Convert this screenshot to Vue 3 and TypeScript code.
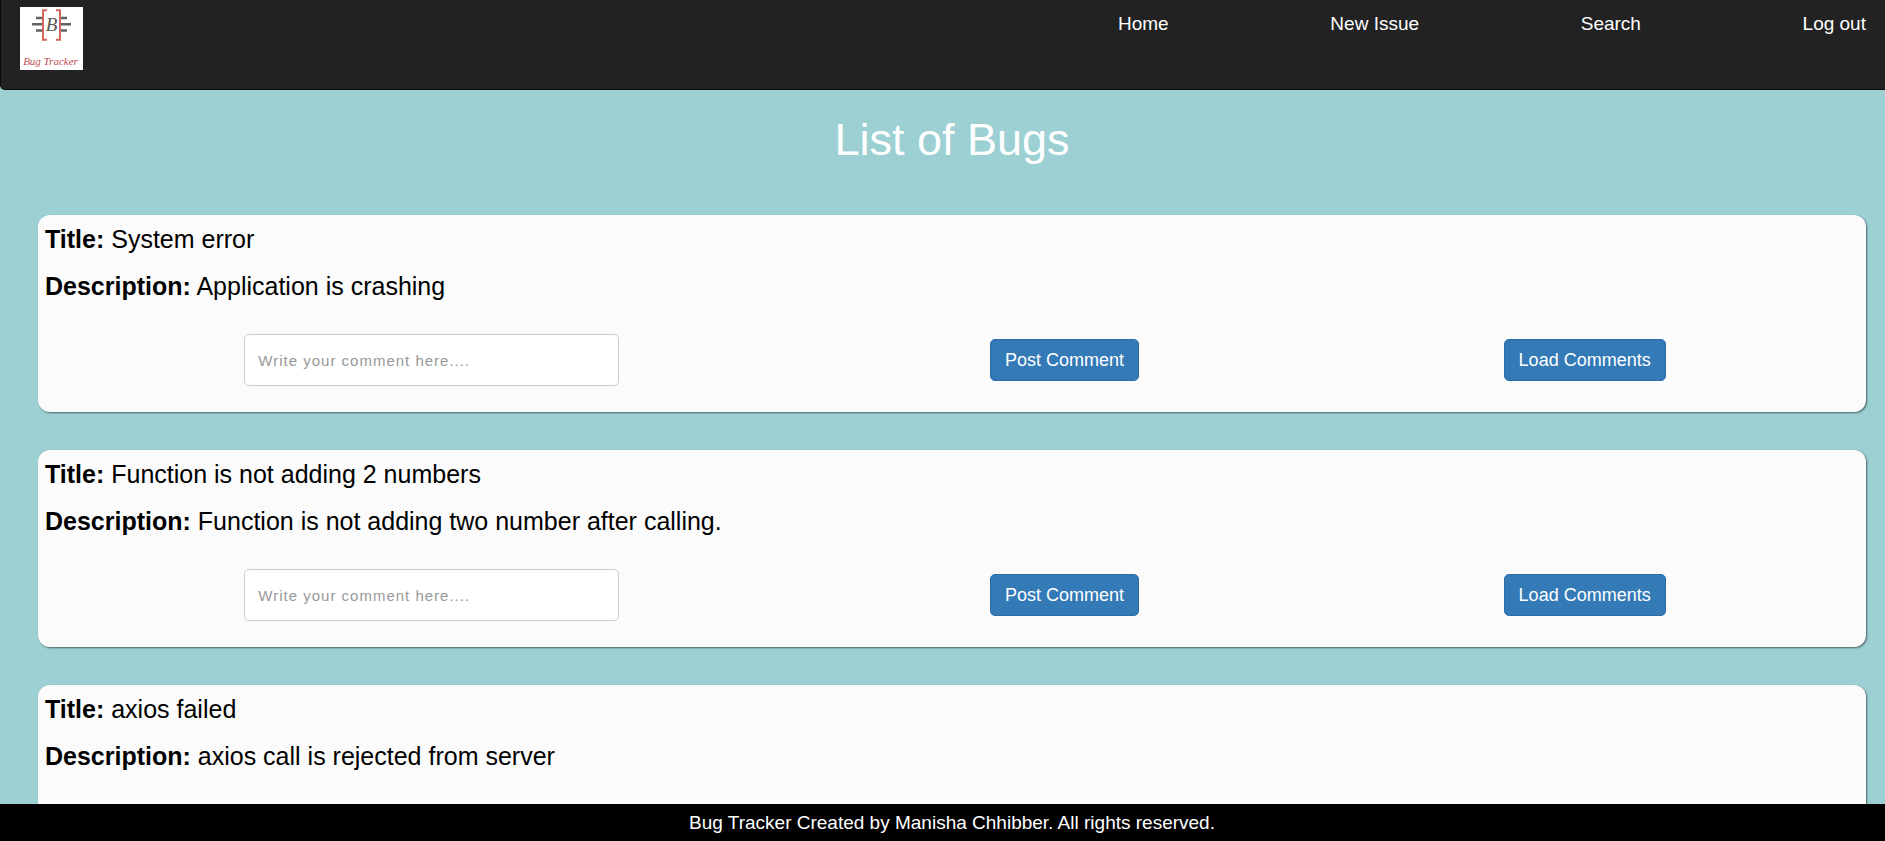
<script setup lang="ts">
import { ref } from 'vue'

interface Bug {
  id: number
  title: string
  description: string
  comment: string
}

const links: string[] = ['Home', 'New Issue', 'Search', 'Log out']

const bugs = ref<Bug[]>([
  { id: 1, title: 'System error', description: 'Application is crashing', comment: '' },
  { id: 2, title: 'Function is not adding 2 numbers', description: 'Function is not adding two number after calling.', comment: '' },
  { id: 3, title: 'axios failed', description: 'axios call is rejected from server', comment: '' },
])
</script>

<template>
  <div class="page">
    <div class="scroller">
      <header class="navbar">
        <a class="brand" href="#" aria-label="Bug Tracker">
          <svg class="logo" viewBox="0 0 63 63" aria-hidden="true">
            <rect width="63" height="63" fill="#fff" />
            <g stroke="#626262" stroke-width="2.4">
              <path d="M16 11h7M12 17.3h11M16 23.5h7M40 11h7M40 17.3h11M40 23.5h7" />
            </g>
            <g fill="none" stroke="#d4655c" stroke-width="2">
              <path d="M27 3.2h-4v29.6h4M36 3.2h4v29.6h-4" />
            </g>
            <text class="logo-letter" x="31.5" y="24" text-anchor="middle">B</text>
            <text class="logo-name" x="30.5" y="58" text-anchor="middle">Bug Tracker</text>
          </svg>
        </a>
        <nav class="links">
          <a v-for="link in links" :key="link" href="#">{{ link }}</a>
        </nav>
      </header>

      <main class="content">
        <h1>List of Bugs</h1>
        <article v-for="bug in bugs" :key="bug.id" class="card">
          <p><strong>Title:</strong> {{ bug.title }}</p>
          <p><strong>Description:</strong> {{ bug.description }}</p>
          <form class="actions" @submit.prevent>
            <input
              v-model="bug.comment"
              type="text"
              placeholder="Write your comment here...."
              :aria-label="'Comment on ' + bug.title"
            />
            <button type="submit">Post Comment</button>
            <button type="button">Load Comments</button>
          </form>
        </article>
      </main>
    </div>

    <footer class="footer">Bug Tracker Created by Manisha Chhibber. All rights reserved.</footer>
  </div>
</template>

<style>
body {
  margin: 0;
  background: #9dd0d3;
}
</style>

<style scoped>
.page {
  display: flex;
  flex-direction: column;
  height: 100vh;
  color: #000;
  font-family: "Liberation Sans", Arial, sans-serif;
}

.scroller {
  flex: 1;
  min-height: 0;
  overflow-y: auto;
  scrollbar-width: none;
}

.navbar {
  display: flex;
  justify-content: space-between;
  align-items: flex-start;
  box-sizing: border-box;
  min-height: 90px;
  padding: 7px 19px 6px;
  background: #222;
  border: solid #080808;
  border-width: 0 0 1px 1px;
  border-bottom-left-radius: 5px;
}

.brand,
.logo {
  display: block;
}

.logo {
  width: 63px;
  height: 63px;
}

.logo-letter {
  font: italic 19px "Liberation Serif", serif;
  fill: #555;
}

.logo-name {
  font: italic 11px "Liberation Serif", serif;
  fill: #c04a50;
}

.links {
  display: flex;
  justify-content: space-between;
  width: 748px;
  max-width: 80%;
  padding-top: 4px;
}

.links a {
  color: #fff;
  font-size: 19px;
  line-height: 26px;
  text-decoration: none;
}

.content {
  padding: 25px 19px 38px 38px;
}

h1 {
  margin: 0 0 50px;
  color: #fff;
  font-size: 45px;
  font-weight: 400;
  line-height: 50px;
  text-align: center;
}

.card {
  margin-bottom: 38px;
  padding: 6px 0 26px;
  background: #fbfbfb;
  border-radius: 12px;
  box-shadow: 1px 1px 2px #4a6668;
}

.card p {
  margin: 0 7px 11px;
  font-size: 25px;
  line-height: 36px;
}

.actions {
  display: flex;
  align-items: center;
  justify-content: space-around;
  margin-top: 30px;
  padding: 0 18px;
}

.actions input {
  box-sizing: border-box;
  width: 375px;
  height: 52px;
  margin: 0 6px;
  padding: 1px 13px 0;
  color: #555;
  background: #fff;
  border: 1px solid #ccc;
  border-radius: 5px;
  font-family: inherit;
  font-size: 15px;
  letter-spacing: 1px;
}

.actions input::placeholder {
  color: #999;
  opacity: 1;
}

.actions button {
  height: 42px;
  padding: 0 14px;
  color: #fff;
  background: #337ab7;
  border: 1px solid #2e6da4;
  border-radius: 5px;
  font-family: inherit;
  font-size: 18px;
  cursor: pointer;
}

.footer {
  padding-left: 19px;
  color: #fff;
  background: #000;
  font-size: 19px;
  line-height: 37px;
  text-align: center;
}
</style>
